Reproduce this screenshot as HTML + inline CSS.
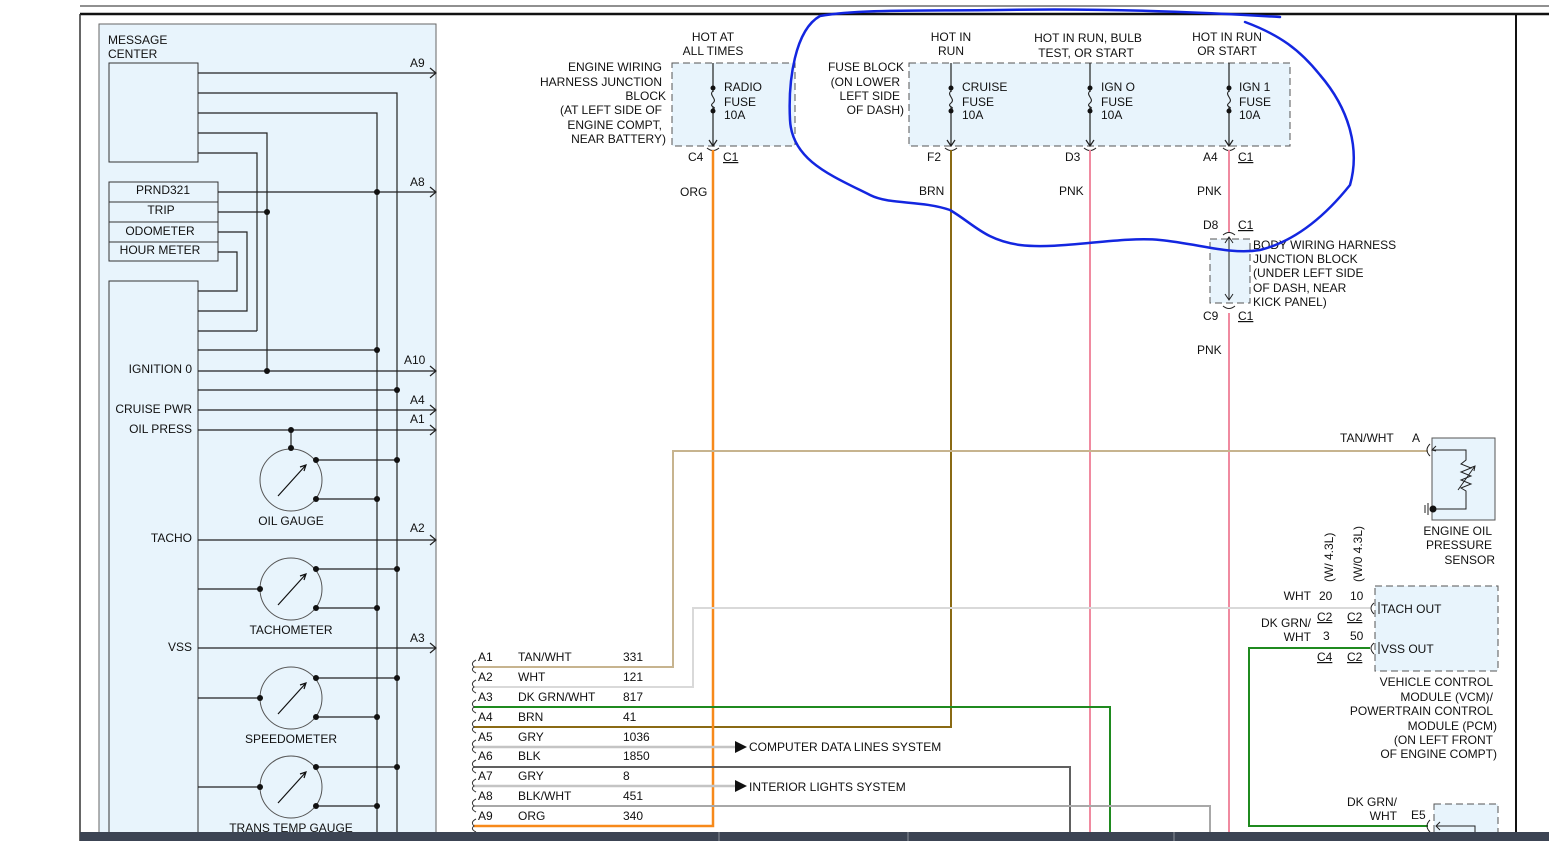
<!DOCTYPE html>
<html><head><meta charset="utf-8"><style>
html,body{margin:0;padding:0;background:#fff;width:1549px;height:841px;overflow:hidden}
svg{display:block}
text{font-family:"Liberation Sans",Arial,sans-serif;font-size:12px;fill:#111}
</style></head><body>
<svg width="1549" height="841" viewBox="0 0 1549 841" xmlns="http://www.w3.org/2000/svg">
<!-- frame -->
<line x1="80" y1="6" x2="1549" y2="6" stroke="#222" stroke-width="1"/>
<line x1="80" y1="14" x2="1549" y2="14" stroke="#111" stroke-width="2.5"/>
<line x1="80" y1="14" x2="80" y2="841" stroke="#333" stroke-width="1.5"/>
<line x1="1516" y1="14" x2="1516" y2="841" stroke="#111" stroke-width="2"/>

<!-- message center panel -->
<rect x="99" y="24" width="337" height="830" fill="#e8f4fc" stroke="#666" stroke-width="1"/>
<rect x="109" y="63" width="89" height="99" fill="#e8f4fc" stroke="#333"/>
<rect x="109" y="182" width="109" height="79" fill="#e8f4fc" stroke="#333"/>
<line x1="109" y1="202" x2="218" y2="202" stroke="#333"/>
<line x1="109" y1="222" x2="218" y2="222" stroke="#333"/>
<line x1="109" y1="242" x2="218" y2="242" stroke="#333"/>
<rect x="109" y="281" width="89" height="580" fill="#e8f4fc" stroke="#333"/>
<text x="108" y="44">MESSAGE</text><text x="108" y="58">CENTER</text>
<text x="163" y="194" text-anchor="middle">PRND321</text>
<text x="161" y="214" text-anchor="middle">TRIP</text>
<text x="160" y="235" text-anchor="middle">ODOMETER</text>
<text x="160" y="254" text-anchor="middle">HOUR METER</text>

<g stroke="#222" stroke-width="1.2" fill="none">
<path d="M198 73H436M198 93H397V841M198 113H377V841M198 133H267V371M198 153H257V331"/>
<path d="M218 192H436M218 212H267M218 232H247V311H198M218 252H237V291H198"/>
<path d="M198 331H257M198 350H377M198 371H436M198 390H397M198 410H436M198 430H436M198 540H436M198 648H436"/>
<path d="M291 430V448M316 460H397M316 499H377M198 589H260M316 569H397M316 608H377M198 698H260M316 678H397M316 717H377M198 787H260M316 767H397M316 806H377"/>
<path d="M430 68L436 73L430 78M430 187L436 192L430 197M430 366L436 371L430 376M430 405L436 410L430 415M430 425L436 430L430 435M430 535L436 540L430 545M430 643L436 648L430 653"/>
</g>
<g fill="#111">
<circle cx="377" cy="192" r="3"/><circle cx="267" cy="212" r="3"/><circle cx="377" cy="350" r="3"/><circle cx="267" cy="371" r="3"/><circle cx="397" cy="390" r="3"/><circle cx="291" cy="430" r="3"/>
<circle cx="397" cy="460" r="3"/><circle cx="377" cy="499" r="3"/><circle cx="397" cy="569" r="3"/><circle cx="377" cy="608" r="3"/><circle cx="397" cy="678" r="3"/><circle cx="377" cy="717" r="3"/><circle cx="397" cy="767" r="3"/><circle cx="377" cy="806" r="3"/>
</g>
<text x="410" y="67">A9</text><text x="410" y="186">A8</text><text x="404" y="364">A10</text><text x="410" y="404">A4</text><text x="410" y="423">A1</text><text x="410" y="532">A2</text><text x="410" y="642">A3</text>
<text x="192" y="373" text-anchor="end">IGNITION 0</text>
<text x="192" y="413" text-anchor="end">CRUISE PWR</text>
<text x="192" y="433" text-anchor="end">OIL PRESS</text>
<text x="192" y="542" text-anchor="end">TACHO</text>
<text x="192" y="651" text-anchor="end">VSS</text>

<!-- gauges -->
<g stroke="#555" fill="none" stroke-width="1">
<circle cx="291" cy="480" r="31"/><circle cx="291" cy="589" r="31"/><circle cx="291" cy="698" r="31"/><circle cx="291" cy="787" r="31"/>
</g>
<g stroke="#111" stroke-width="1.2" fill="none">
<path d="M278 496L306 465M300 467L306 465L304 471"/>
<path d="M278 605L306 574M300 576L306 574L304 580"/>
<path d="M278 714L306 683M300 685L306 683L304 689"/>
<path d="M278 803L306 772M300 774L306 772L304 778"/>
</g>
<g fill="#111">
<circle cx="291" cy="448" r="3"/><circle cx="316" cy="460" r="3"/><circle cx="316" cy="499" r="3"/>
<circle cx="260" cy="589" r="3"/><circle cx="316" cy="569" r="3"/><circle cx="316" cy="608" r="3"/>
<circle cx="260" cy="698" r="3"/><circle cx="316" cy="678" r="3"/><circle cx="316" cy="717" r="3"/>
<circle cx="260" cy="787" r="3"/><circle cx="316" cy="767" r="3"/><circle cx="316" cy="806" r="3"/>
</g>
<text x="291" y="525" text-anchor="middle">OIL GAUGE</text>
<text x="291" y="634" text-anchor="middle">TACHOMETER</text>
<text x="291" y="743" text-anchor="middle">SPEEDOMETER</text>
<text x="291" y="832" text-anchor="middle">TRANS TEMP GAUGE</text>

<!-- fuse boxes -->
<rect x="672" y="63" width="123" height="83" fill="#e8f4fc" stroke="#555" stroke-dasharray="7,4"/>
<rect x="909" y="63" width="381" height="83" fill="#e8f4fc" stroke="#555" stroke-dasharray="7,4"/>
<g stroke="#222" stroke-width="1.2" fill="none">
<path d="M713 63V146M709 140L713 146L717 140M951 63V146M947 140L951 146L955 140M1090 63V146M1086 140L1090 146L1094 140M1229 63V146M1225 140L1229 146L1233 140"/>
</g>
<g fill="#111"><circle cx="713" cy="88" r="2.5"/><circle cx="713" cy="111" r="2.5"/><circle cx="951" cy="88" r="2.5"/><circle cx="951" cy="111" r="2.5"/><circle cx="1090" cy="88" r="2.5"/><circle cx="1090" cy="111" r="2.5"/><circle cx="1229" cy="88" r="2.5"/><circle cx="1229" cy="111" r="2.5"/></g>
<g stroke="#e8f4fc" stroke-width="3"><path d="M713 92V107M951 92V107M1090 92V107M1229 92V107"/></g>
<g stroke="#222" stroke-width="1.1" fill="none">
<path d="M713 91C708 95 718 99 713 103C708 107 718 107 713 109M951 91C946 95 956 99 951 103C946 107 956 107 951 109M1090 91C1085 95 1095 99 1090 103C1085 107 1095 107 1090 109M1229 91C1224 95 1234 99 1229 103C1224 107 1234 107 1229 109"/>
<path d="M707 148Q713 153 719 148M945 148Q951 153 957 148M1084 148Q1090 153 1096 148M1223 148Q1229 153 1235 148"/>
</g>
<text x="713" y="41" text-anchor="middle">HOT AT</text><text x="713" y="55" text-anchor="middle">ALL TIMES</text>
<text x="951" y="41" text-anchor="middle">HOT IN</text><text x="951" y="55" text-anchor="middle">RUN</text>
<text x="1088" y="42" text-anchor="middle">HOT IN RUN, BULB</text><text x="1086" y="57" text-anchor="middle">TEST, OR START</text>
<text x="1227" y="41" text-anchor="middle">HOT IN RUN</text><text x="1227" y="55" text-anchor="middle">OR START</text>
<text x="662" y="71" text-anchor="end">ENGINE WIRING</text><text x="662" y="86" text-anchor="end">HARNESS JUNCTION</text><text x="666" y="100" text-anchor="end">BLOCK</text><text x="662" y="114" text-anchor="end">(AT LEFT SIDE OF</text><text x="662" y="129" text-anchor="end">ENGINE COMPT,</text><text x="666" y="143" text-anchor="end">NEAR BATTERY)</text>
<text x="904" y="71" text-anchor="end">FUSE BLOCK</text><text x="900" y="86" text-anchor="end">(ON LOWER</text><text x="900" y="100" text-anchor="end">LEFT SIDE</text><text x="904" y="114" text-anchor="end">OF DASH)</text>
<text x="724" y="91">RADIO</text><text x="724" y="106">FUSE</text><text x="724" y="119">10A</text>
<text x="962" y="91">CRUISE</text><text x="962" y="106">FUSE</text><text x="962" y="119">10A</text>
<text x="1101" y="91">IGN O</text><text x="1101" y="106">FUSE</text><text x="1101" y="119">10A</text>
<text x="1239" y="91">IGN 1</text><text x="1239" y="106">FUSE</text><text x="1239" y="119">10A</text>
<text x="688" y="161">C4</text><text x="723" y="161" text-decoration="underline">C1</text>
<text x="927" y="161">F2</text><text x="1065" y="161">D3</text><text x="1203" y="161">A4</text><text x="1238" y="161" text-decoration="underline">C1</text>
<text x="680" y="196">ORG</text><text x="919" y="195">BRN</text><text x="1059" y="195">PNK</text><text x="1197" y="195">PNK</text>

<!-- body junction -->
<rect x="1210" y="239" width="40" height="64" fill="#e8f4fc" stroke="#555" stroke-dasharray="7,4"/>
<text x="1203" y="229">D8</text><text x="1238" y="229" text-decoration="underline">C1</text>
<text x="1203" y="320">C9</text><text x="1238" y="320" text-decoration="underline">C1</text>
<text x="1253" y="249">BODY WIRING HARNESS</text><text x="1253" y="263">JUNCTION BLOCK</text><text x="1253" y="277">(UNDER LEFT SIDE</text><text x="1253" y="292">OF DASH, NEAR</text><text x="1253" y="306">KICK PANEL)</text>
<text x="1197" y="354">PNK</text>

<!-- colored wires -->
<g fill="none" stroke-width="2">
<path d="M1229 150V233M1229 313V841" stroke="#f08aa0"/>
<path d="M1090 150V841" stroke="#f08aa0"/>
<path d="M951 150V727H474" stroke="#8a6a14"/>
<path d="M713 150V826H474" stroke="#f7891a" stroke-width="2.5"/>
<path d="M474 667H673V451H1428" stroke="#c7b48f"/>
<path d="M474 687H693V608H1370" stroke="#d9d9d9"/>
<path d="M474 707H1110V841" stroke="#1f8a1f"/>
<path d="M1370 648H1249V826H1428" stroke="#1f8a1f"/>
<path d="M474 747H735M474 786H735" stroke="#c4c4c4" stroke-width="2.5"/>
<path d="M474 767H1070V841" stroke="#606060"/>
<path d="M474 806H1210V841" stroke="#a8a8a8"/>
</g>
<g stroke="#222" stroke-width="1" fill="none">
<path d="M1229 237V300M1225 243L1229 237L1233 243M1225 294L1229 300L1233 294M1223 235Q1229 230 1235 235M1223 306Q1229 311 1235 306"/>
</g>
<path d="M735 741L747 747L735 753Z" fill="#111"/><path d="M735 780L747 786L735 792Z" fill="#111"/>
<text x="749" y="751">COMPUTER DATA LINES SYSTEM</text>
<text x="749" y="791">INTERIOR LIGHTS SYSTEM</text>
<g stroke="#333" fill="none" stroke-width="1"><path d="M476 660Q470 663 474 667Q470 670 476 673M476 680Q470 683 474 687Q470 690 476 693M476 700Q470 703 474 707Q470 710 476 713M476 720Q470 723 474 727Q470 730 476 733M476 740Q470 743 474 747Q470 750 476 753M476 760Q470 763 474 767Q470 770 476 773M476 779Q470 782 474 786Q470 789 476 792M476 799Q470 802 474 806Q470 809 476 812M476 819Q470 822 474 826Q470 829 476 832"/></g>
<g>
<text x="478" y="661">A1</text><text x="518" y="661">TAN/WHT</text><text x="623" y="661">331</text>
<text x="478" y="681">A2</text><text x="518" y="681">WHT</text><text x="623" y="681">121</text>
<text x="478" y="701">A3</text><text x="518" y="701">DK GRN/WHT</text><text x="623" y="701">817</text>
<text x="478" y="721">A4</text><text x="518" y="721">BRN</text><text x="623" y="721">41</text>
<text x="478" y="741">A5</text><text x="518" y="741">GRY</text><text x="623" y="741">1036</text>
<text x="478" y="760">A6</text><text x="518" y="760">BLK</text><text x="623" y="760">1850</text>
<text x="478" y="780">A7</text><text x="518" y="780">GRY</text><text x="623" y="780">8</text>
<text x="478" y="800">A8</text><text x="518" y="800">BLK/WHT</text><text x="623" y="800">451</text>
<text x="478" y="820">A9</text><text x="518" y="820">ORG</text><text x="623" y="820">340</text>
</g>

<!-- oil pressure sensor -->
<rect x="1432" y="438" width="63" height="82" fill="#e8f4fc" stroke="#555"/>
<g stroke="#222" stroke-width="1" fill="none">
<path d="M1432 450H1466V460L1461 464L1471 468L1461 472L1471 476L1461 480L1471 484L1461 488L1466 491V509H1432"/>
<path d="M1458 490L1475 466M1470 468L1475 466L1474 471M1436 451L1432 450L1436 446M1430 444Q1424 450 1430 456M1428 503V515M1425 505V513"/>
</g>
<circle cx="1433" cy="509" r="3.5" fill="#111"/>
<text x="1340" y="442">TAN/WHT</text><text x="1412" y="442">A</text>
<text x="1492" y="535" text-anchor="end">ENGINE OIL</text><text x="1492" y="549" text-anchor="end">PRESSURE</text><text x="1495" y="564" text-anchor="end">SENSOR</text>

<!-- VCM -->
<rect x="1375" y="586" width="123" height="85" fill="#e8f4fc" stroke="#555" stroke-dasharray="7,4"/>
<g stroke="#222" fill="none"><path d="M1374 603Q1368 608 1374 614M1374 643Q1368 648 1374 654M1379 602V614M1379 642V654"/></g>
<text x="1381" y="613">TACH OUT</text><text x="1381" y="653">VSS OUT</text>
<text transform="translate(1333,582) rotate(-90)">(W/ 4.3L)</text>
<text transform="translate(1362,582) rotate(-90)">(W/0 4.3L)</text>
<text x="1311" y="600" text-anchor="end">WHT</text><text x="1319" y="600">20</text><text x="1350" y="600">10</text>
<text x="1317" y="621" text-decoration="underline">C2</text><text x="1347" y="621" text-decoration="underline">C2</text>
<text x="1311" y="627" text-anchor="end">DK GRN/</text><text x="1311" y="641" text-anchor="end">WHT</text><text x="1323" y="640">3</text><text x="1350" y="640">50</text>
<text x="1317" y="661" text-decoration="underline">C4</text><text x="1347" y="661" text-decoration="underline">C2</text>
<text x="1493" y="686" text-anchor="end">VEHICLE CONTROL</text><text x="1493" y="701" text-anchor="end">MODULE (VCM)/</text><text x="1493" y="715" text-anchor="end">POWERTRAIN CONTROL</text><text x="1497" y="730" text-anchor="end">MODULE (PCM)</text><text x="1493" y="744" text-anchor="end">(ON LEFT FRONT</text><text x="1497" y="758" text-anchor="end">OF ENGINE COMPT)</text>
<rect x="1434" y="804" width="64" height="60" fill="#e8f4fc" stroke="#555" stroke-dasharray="7,4"/>
<g stroke="#222" fill="none"><path d="M1436 826H1475V841M1440 822L1436 826L1440 830M1430 820Q1424 826 1430 832"/></g>
<text x="1397" y="806" text-anchor="end">DK GRN/</text><text x="1397" y="820" text-anchor="end">WHT</text><text x="1411" y="819">E5</text>

<!-- blue hand loop -->
<path d="M1280 17C1200 12 1100 8 1000 10C920 11 860 9 820 16C795 30 788 80 790 120C792 160 830 175 870 195C890 205 920 200 950 210C975 225 985 240 1020 245C1060 250 1120 236 1160 240C1200 244 1230 255 1260 250C1300 240 1330 210 1350 185C1360 150 1350 110 1320 75C1300 50 1280 35 1245 22" fill="none" stroke="#1326e0" stroke-width="2.5" stroke-linecap="round"/>

<!-- bottom bar -->
<rect x="80" y="832" width="1469" height="9" fill="#3c4453"/>
<g stroke="#8a909a" stroke-width="1"><path d="M719 832V841M908 832V841M1174 832V841"/></g>
</svg>
</body></html>
